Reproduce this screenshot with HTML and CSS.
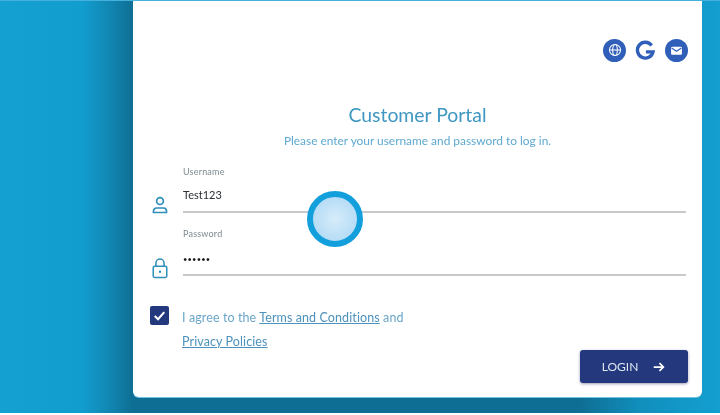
FILE: index.html
```html
<!DOCTYPE html>
<html lang="en">
<head>
<meta charset="utf-8">
<title>Customer Portal</title>
<link rel="stylesheet" href="styles.css">
</head>
<body>
<div class="stage">
  <main class="card">
    <div class="socials">
      <span class="social social-fill">
        <svg viewBox="0 0 24 24" width="14" height="14" fill="none" stroke="#fff" stroke-width="1.8"><circle cx="12" cy="12" r="9.5"/><ellipse cx="12" cy="12" rx="4" ry="9.5"/><path d="M2.5 12h19"/></svg>
      </span>
      <span class="social">
        <svg viewBox="0 0 24 24" width="21" height="21" fill="none" stroke="#2f5fb8" stroke-width="3.8"><path d="M19 6.2A9 9 0 1 0 20.6 13.500H12.500"/></svg>
      </span>
      <span class="social social-fill">
        <svg viewBox="0 0 24 24" width="13" height="13"><rect x="2" y="5" width="20" height="15" rx="2" fill="#fff"/><path d="M3 7.500l9 6 9-6" fill="none" stroke="#2f5fb8" stroke-width="2"/></svg>
      </span>
    </div>
    <h1 class="title">Customer Portal</h1>
    <p class="subtitle">Please enter your username and password to log in.</p>
    <form class="form">
      <div class="field">
        <svg class="field-icon" viewBox="0 0 20 20" width="20" height="20" fill="none" stroke="#2f8fbd" stroke-width="1.7"><circle cx="10" cy="6" r="3.4"/><path d="M3.500 17.500v-1.400c0-1.800 1.400-3.100 3.200-3.100h6.600c1.800 0 3.200 1.300 3.200 3.100v1.400z"/></svg>
        <div class="control">
          <span class="label">Username</span>
          <span class="value">Test123</span>
        </div>
      </div>
      <div class="field field-second">
        <svg class="field-icon field-icon-lock" viewBox="0 0 20 24" width="18" height="22" fill="none" stroke="#2f8fbd" stroke-width="1.7"><rect x="2.500" y="10" width="15" height="12.500" rx="1.500"/><path d="M5.500 10V6.500a4.500 4.500 0 0 1 9 0V10"/><circle cx="10" cy="16.200" r="1.300" fill="#2f8fbd" stroke="none"/></svg>
        <div class="control">
          <span class="label">Password</span>
          <span class="value value-dots">••••••</span>
        </div>
      </div>
      <div class="agree">
        <span class="checkbox">
          <svg viewBox="0 0 20 20" width="19" height="19" fill="none" stroke="#fff" stroke-width="2.200"><path d="M5 10.500l3.500 3.500 6.500-7.500"/></svg>
        </span>
        <p class="agree-text">I agree to the <a href="#">Terms and Conditions</a> and<br><a href="#">Privacy Policies</a></p>
      </div>
      <div class="actions">
        <button class="login" type="button">LOGIN
          <svg viewBox="0 0 16 16" width="14" height="14" fill="none" stroke="#fff" stroke-width="2"><path d="M2 8h11M8.500 3.500L13 8l-4.500 4.500"/></svg>
        </button>
      </div>
    </form>
  </main>
  <span class="touch"></span>
</div>
</body>
</html>
```
FILE: styles.css
```css
* { box-sizing: border-box; }
html, body { margin: 0; padding: 0; background: #fff; }
body { font-family: "Lato", "Liberation Sans", sans-serif; width: 720px; height: 415px; overflow: hidden; }
.stage {
  position: relative;
  width: 720px;
  height: 413px;
  padding-left: 133px;
  background: linear-gradient(90deg, #14a0d0 0, #129dcf 82px, #1188b4 108px, #0f6e93 133px, #0f6e93 580px, #118fbd 640px, #139fd0 720px);
  border-top: 1px solid #45b0dc;
  filter: blur(.35px);
}
.card {
  width: 569px;
  height: 396px;
  background: #fff;
  border-radius: 0 0 6px 6px;
  display: flex;
  flex-direction: column;
  box-shadow: 0 1px 0 #6ec3e0;
}
.socials { display: flex; justify-content: flex-end; align-items: center; gap: 8px; padding: 37px 14px 0 0; height: 61px; }
.social { width: 23px; height: 23px; display: flex; align-items: center; justify-content: center; border-radius: 50%; }
.social-fill { background: #2f5fb8; }
.title { margin: 41px 0 0; font-size: 19.4px; line-height: 24px; font-weight: 400; text-align: center; color: #3f97c2; }
.subtitle { margin: 6px 0 0; font-size: 11.900px; line-height: 16px; text-align: center; color: #5fa9d0; }
.form { display: flex; flex-direction: column; padding: 17px 14px 0 17px; }
.field { display: flex; align-items: flex-end; gap: 13px; height: 47px; }
.field-second { margin-top: 15px; height: 48px; }
.field-icon { flex: none; margin-bottom: -2px; margin-left: 0; }
.field-icon-lock { margin: 0 1px -3px 1px; }
.control { flex: 1; height: 100%; margin-right: 2px; display: flex; flex-direction: column; border-bottom: 2px solid #c8c9cb; }
.label { font-size: 9px; line-height: 12px; color: #7d8a90; letter-spacing: .2px; }
.value { margin-top: 9px; font-size: 11px; line-height: 16px; color: #2b3036; }
.value-dots { margin-top: 13px; font-size: 7.500px; line-height: 14px; letter-spacing: .2px; color: #15181c; }
.agree { display: flex; gap: 13px; margin-top: 30px; }
.checkbox { flex: none; width: 19px; height: 19px; background: #24387e; border-radius: 2px; display: block; }
.agree-text { margin: 0; font-size: 12.500px; letter-spacing: .1px; line-height: 24px; color: #6aa6c8; }
.agree-text a { color: #4c92bd; text-decoration: underline; }
.actions { display: flex; justify-content: flex-end; margin-top: -4px; }
.login {
  width: 108px; height: 33px;
  display: flex; align-items: center; justify-content: center; gap: 14px;
  background: #24387e; color: #dfe6f2; border: 0; border-radius: 3px;
  font: 400 12px "Lato", sans-serif;
  box-shadow: 0 1px 3px rgba(30,40,90,.45);
}
.touch {
  position: absolute;
  left: 307px; top: 190px;
  width: 56px; height: 56px;
  border-radius: 50%;
  border: 6px solid #139fdc;
  background: radial-gradient(circle, #d6ecfa 0, #a9d6f4 100%);
}
```
